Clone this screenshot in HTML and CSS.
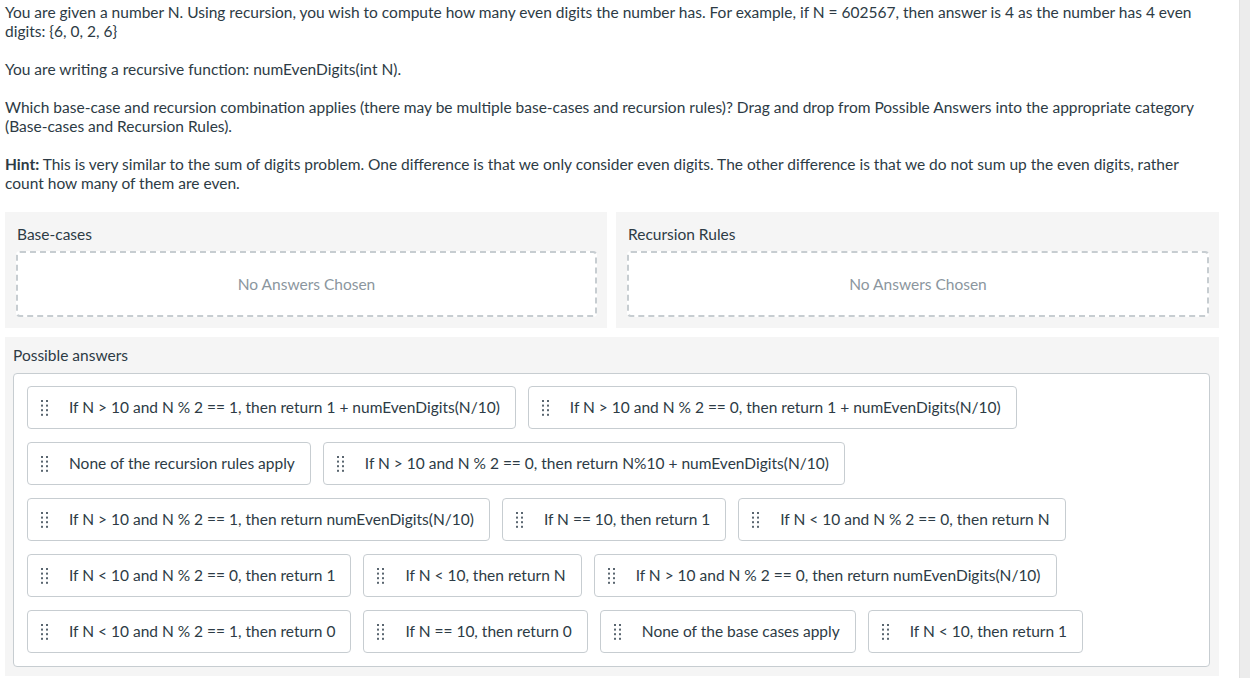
FILE: index.html
```html
<!DOCTYPE html>
<html lang="en">
<head>
<meta charset="utf-8">
<title>numEvenDigits</title>
<link rel="stylesheet" href="styles.css">
</head>
<body>
<div class="page">
  <p>You are given a number N. Using recursion, you wish to compute how many even digits the number has. For example, if N = 602567, then answer is 4 as the number has 4 even digits: {6, 0, 2, 6}</p>
  <p>You are writing a recursive function: numEvenDigits(int N).</p>
  <p>Which base-case and recursion combination applies (there may be multiple base-cases and recursion rules)? Drag and drop from Possible Answers into the appropriate category (Base-cases and Recursion Rules).</p>
  <p><strong>Hint:</strong> This is very similar to the sum of digits problem. One difference is that we only consider even digits. The other difference is that we do not sum up the even digits, rather count how many of them are even.</p>

  <div class="categories">
    <div class="panel">
      <div class="panel-label">Base-cases</div>
      <div class="dropzone">No Answers Chosen</div>
    </div>
    <div class="panel">
      <div class="panel-label">Recursion Rules</div>
      <div class="dropzone">No Answers Chosen</div>
    </div>
  </div>

  <div class="answers-panel">
    <div class="answers-label">Possible answers</div>
    <div class="answers-box">
      <div class="row">
        <div class="chip"><svg class="handle" viewBox="0 0 7 16"><g fill="#5a6670"><rect x="0" y="0" width="2" height="2"/><rect x="5" y="0" width="2" height="2"/><rect x="0" y="4.6" width="2" height="2"/><rect x="5" y="4.6" width="2" height="2"/><rect x="0" y="9.2" width="2" height="2"/><rect x="5" y="9.2" width="2" height="2"/><rect x="0" y="13.8" width="2" height="2"/><rect x="5" y="13.8" width="2" height="2"/></g></svg><span>If N &gt; 10 and N % 2 == 1, then return 1 + numEvenDigits(N/10)</span></div>
        <div class="chip"><svg class="handle" viewBox="0 0 7 16"><g fill="#5a6670"><rect x="0" y="0" width="2" height="2"/><rect x="5" y="0" width="2" height="2"/><rect x="0" y="4.6" width="2" height="2"/><rect x="5" y="4.6" width="2" height="2"/><rect x="0" y="9.2" width="2" height="2"/><rect x="5" y="9.2" width="2" height="2"/><rect x="0" y="13.8" width="2" height="2"/><rect x="5" y="13.8" width="2" height="2"/></g></svg><span>If N &gt; 10 and N % 2 == 0, then return 1 + numEvenDigits(N/10)</span></div>
      </div>
      <div class="row">
        <div class="chip"><svg class="handle" viewBox="0 0 7 16"><g fill="#5a6670"><rect x="0" y="0" width="2" height="2"/><rect x="5" y="0" width="2" height="2"/><rect x="0" y="4.6" width="2" height="2"/><rect x="5" y="4.6" width="2" height="2"/><rect x="0" y="9.2" width="2" height="2"/><rect x="5" y="9.2" width="2" height="2"/><rect x="0" y="13.8" width="2" height="2"/><rect x="5" y="13.8" width="2" height="2"/></g></svg><span>None of the recursion rules apply</span></div>
        <div class="chip"><svg class="handle" viewBox="0 0 7 16"><g fill="#5a6670"><rect x="0" y="0" width="2" height="2"/><rect x="5" y="0" width="2" height="2"/><rect x="0" y="4.6" width="2" height="2"/><rect x="5" y="4.6" width="2" height="2"/><rect x="0" y="9.2" width="2" height="2"/><rect x="5" y="9.2" width="2" height="2"/><rect x="0" y="13.8" width="2" height="2"/><rect x="5" y="13.8" width="2" height="2"/></g></svg><span>If N &gt; 10 and N % 2 == 0, then return N%10 + numEvenDigits(N/10)</span></div>
      </div>
      <div class="row">
        <div class="chip"><svg class="handle" viewBox="0 0 7 16"><g fill="#5a6670"><rect x="0" y="0" width="2" height="2"/><rect x="5" y="0" width="2" height="2"/><rect x="0" y="4.6" width="2" height="2"/><rect x="5" y="4.6" width="2" height="2"/><rect x="0" y="9.2" width="2" height="2"/><rect x="5" y="9.2" width="2" height="2"/><rect x="0" y="13.8" width="2" height="2"/><rect x="5" y="13.8" width="2" height="2"/></g></svg><span>If N &gt; 10 and N % 2 == 1, then return numEvenDigits(N/10)</span></div>
        <div class="chip"><svg class="handle" viewBox="0 0 7 16"><g fill="#5a6670"><rect x="0" y="0" width="2" height="2"/><rect x="5" y="0" width="2" height="2"/><rect x="0" y="4.6" width="2" height="2"/><rect x="5" y="4.6" width="2" height="2"/><rect x="0" y="9.2" width="2" height="2"/><rect x="5" y="9.2" width="2" height="2"/><rect x="0" y="13.8" width="2" height="2"/><rect x="5" y="13.8" width="2" height="2"/></g></svg><span>If N == 10, then return 1</span></div>
        <div class="chip"><svg class="handle" viewBox="0 0 7 16"><g fill="#5a6670"><rect x="0" y="0" width="2" height="2"/><rect x="5" y="0" width="2" height="2"/><rect x="0" y="4.6" width="2" height="2"/><rect x="5" y="4.6" width="2" height="2"/><rect x="0" y="9.2" width="2" height="2"/><rect x="5" y="9.2" width="2" height="2"/><rect x="0" y="13.8" width="2" height="2"/><rect x="5" y="13.8" width="2" height="2"/></g></svg><span>If N &lt; 10 and N % 2 == 0, then return N</span></div>
      </div>
      <div class="row">
        <div class="chip"><svg class="handle" viewBox="0 0 7 16"><g fill="#5a6670"><rect x="0" y="0" width="2" height="2"/><rect x="5" y="0" width="2" height="2"/><rect x="0" y="4.6" width="2" height="2"/><rect x="5" y="4.6" width="2" height="2"/><rect x="0" y="9.2" width="2" height="2"/><rect x="5" y="9.2" width="2" height="2"/><rect x="0" y="13.8" width="2" height="2"/><rect x="5" y="13.8" width="2" height="2"/></g></svg><span>If N &lt; 10 and N % 2 == 0, then return 1</span></div>
        <div class="chip"><svg class="handle" viewBox="0 0 7 16"><g fill="#5a6670"><rect x="0" y="0" width="2" height="2"/><rect x="5" y="0" width="2" height="2"/><rect x="0" y="4.6" width="2" height="2"/><rect x="5" y="4.6" width="2" height="2"/><rect x="0" y="9.2" width="2" height="2"/><rect x="5" y="9.2" width="2" height="2"/><rect x="0" y="13.8" width="2" height="2"/><rect x="5" y="13.8" width="2" height="2"/></g></svg><span>If N &lt; 10, then return N</span></div>
        <div class="chip"><svg class="handle" viewBox="0 0 7 16"><g fill="#5a6670"><rect x="0" y="0" width="2" height="2"/><rect x="5" y="0" width="2" height="2"/><rect x="0" y="4.6" width="2" height="2"/><rect x="5" y="4.6" width="2" height="2"/><rect x="0" y="9.2" width="2" height="2"/><rect x="5" y="9.2" width="2" height="2"/><rect x="0" y="13.8" width="2" height="2"/><rect x="5" y="13.8" width="2" height="2"/></g></svg><span>If N &gt; 10 and N % 2 == 0, then return numEvenDigits(N/10)</span></div>
      </div>
      <div class="row">
        <div class="chip"><svg class="handle" viewBox="0 0 7 16"><g fill="#5a6670"><rect x="0" y="0" width="2" height="2"/><rect x="5" y="0" width="2" height="2"/><rect x="0" y="4.6" width="2" height="2"/><rect x="5" y="4.6" width="2" height="2"/><rect x="0" y="9.2" width="2" height="2"/><rect x="5" y="9.2" width="2" height="2"/><rect x="0" y="13.8" width="2" height="2"/><rect x="5" y="13.8" width="2" height="2"/></g></svg><span>If N &lt; 10 and N % 2 == 1, then return 0</span></div>
        <div class="chip"><svg class="handle" viewBox="0 0 7 16"><g fill="#5a6670"><rect x="0" y="0" width="2" height="2"/><rect x="5" y="0" width="2" height="2"/><rect x="0" y="4.6" width="2" height="2"/><rect x="5" y="4.6" width="2" height="2"/><rect x="0" y="9.2" width="2" height="2"/><rect x="5" y="9.2" width="2" height="2"/><rect x="0" y="13.8" width="2" height="2"/><rect x="5" y="13.8" width="2" height="2"/></g></svg><span>If N == 10, then return 0</span></div>
        <div class="chip"><svg class="handle" viewBox="0 0 7 16"><g fill="#5a6670"><rect x="0" y="0" width="2" height="2"/><rect x="5" y="0" width="2" height="2"/><rect x="0" y="4.6" width="2" height="2"/><rect x="5" y="4.6" width="2" height="2"/><rect x="0" y="9.2" width="2" height="2"/><rect x="5" y="9.2" width="2" height="2"/><rect x="0" y="13.8" width="2" height="2"/><rect x="5" y="13.8" width="2" height="2"/></g></svg><span>None of the base cases apply</span></div>
        <div class="chip"><svg class="handle" viewBox="0 0 7 16"><g fill="#5a6670"><rect x="0" y="0" width="2" height="2"/><rect x="5" y="0" width="2" height="2"/><rect x="0" y="4.6" width="2" height="2"/><rect x="5" y="4.6" width="2" height="2"/><rect x="0" y="9.2" width="2" height="2"/><rect x="5" y="9.2" width="2" height="2"/><rect x="0" y="13.8" width="2" height="2"/><rect x="5" y="13.8" width="2" height="2"/></g></svg><span>If N &lt; 10, then return 1</span></div>
      </div>
    </div>
  </div>
</div>
<div class="scroll-track"></div>
</body>
</html>
```

FILE: styles.css
```css
html, body {
  margin: 0;
  padding: 0;
  background: #ffffff;
}

body {
  font-family: Lato, "Open Sans", "Liberation Sans", sans-serif;
  font-size: 15.5px;
  line-height: 19px;
  color: #2d3b45;
  overflow: hidden;
}

.page {
  width: 1214px;
  padding: 3px 0 0 5px;
}

.page p {
  margin: 0 0 19px 0;
}

.page strong {
  font-weight: 700;
}

.categories {
  display: grid;
  grid-template-columns: 602px 603px;
  column-gap: 9px;
  margin-top: 19px;
}

.panel {
  background: #f5f5f5;
  padding: 13px 10px 11px 11px;
}

.panel-label {
  padding-left: 1px;
  margin-bottom: 7px;
}

.dropzone {
  height: 62px;
  border: 2px dashed #c7cdd1;
  border-radius: 4px;
  background: #ffffff;
  display: flex;
  align-items: center;
  justify-content: center;
  color: #8b969e;
}

.answers-panel {
  background: #f5f5f5;
  margin-top: 9px;
  padding: 9px 9px 9px 8px;
}

.answers-label {
  margin-bottom: 8px;
}

.answers-box {
  background: #ffffff;
  border: 1px solid #c7cdd1;
  border-radius: 4px;
  padding: 12px 14px 13px 13px;
  display: flex;
  flex-direction: column;
  gap: 13px;
}

.row {
  display: flex;
  gap: 12px;
}

.chip {
  display: flex;
  align-items: center;
  gap: 21px;
  border: 1px solid #c7cdd1;
  border-radius: 4px;
  padding: 11px 15px 11px 13px;
  background: #ffffff;
  white-space: nowrap;
}

.handle {
  width: 7px;
  height: 16px;
  flex: none;
}

.scroll-track {
  position: fixed;
  top: 0;
  right: 0;
  width: 10px;
  height: 100%;
  background: #ececec;
  border-left: 1px solid #e2e2e2;
}
```
